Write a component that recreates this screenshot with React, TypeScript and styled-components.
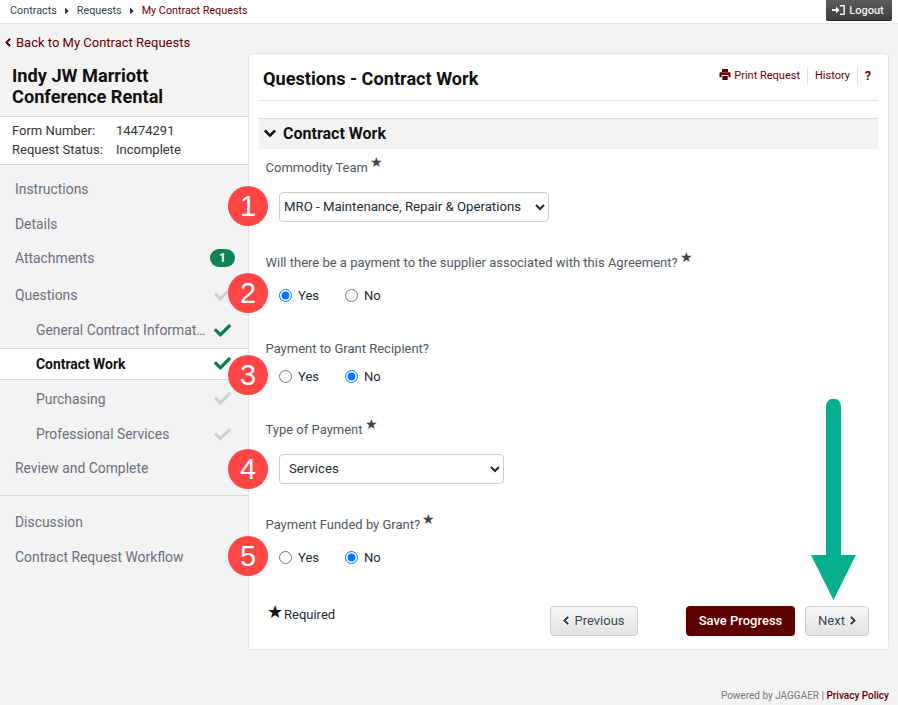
import React from "react";
import styled, { createGlobalStyle } from "styled-components";
import { FaCheck, FaChevronDown, FaChevronLeft, FaChevronRight, FaCaretRight } from "react-icons/fa";

const Global = createGlobalStyle`
  html, body { margin: 0; padding: 0; background: #f3f3f3; }
  body { font-family: Roboto, "Liberation Sans", sans-serif; color: #333; }
  * { box-sizing: border-box; }
`;

const Page = styled.div`
  position: relative;
  width: 898px;
  height: 705px;
  overflow: hidden;
  background: #f3f3f3;
`;
const TopBar = styled.header`
  height: 24px;
  background: #fff;
  border-bottom: 1px solid #e3e3e3;
  display: flex;
  justify-content: space-between;
  padding: 0 6px 0 10px;
`;
const Crumbs = styled.nav`
  display: flex;
  align-items: center;
  height: 21px;
  gap: 5px;
  font-size: 10.8px;
  color: #333f4d;
  svg { font-size: 10px; color: #222; width: 10px; }
`;
const CrumbCurrent = styled.span`
  color: #5f0000;
`;
const LogoutButton = styled.button`
  width: 66px;
  height: 21px;
  border: 0;
  border-bottom: 1px solid #222;
  border-radius: 0 0 2px 2px;
  background: linear-gradient(#5c5c5c, #3e3e3e);
  color: #eee;
  font: 500 11px Roboto, sans-serif;
  display: flex;
  align-items: center;
  justify-content: center;
  gap: 3px;
  padding: 0 2px 0 0;
`;
const Columns = styled.div`
  display: grid;
  grid-template-columns: 248px 641px;
`;
const Sidebar = styled.aside`
  display: flex;
  flex-direction: column;
`;
const BackLink = styled.a`
  display: flex;
  align-items: center;
  gap: 5px;
  height: 18px;
  margin: 9px 0 0 5px;
  font-size: 13px;
  color: #5f0000;
  white-space: nowrap;
  width: 300px;
  svg { font-size: 9px; width: 6px; stroke: currentColor; stroke-width: 50px; }
`;
const RequestTitle = styled.h1`
  margin: 14px 0 9px 12px;
  font-size: 18.2px;
  line-height: 21px;
  font-weight: 700;
  color: #111;
`;
const InfoBlock = styled.dl`
  margin: 0;
  height: 49px;
  padding: 4px 12px 0;
  background: #fff;
  border-top: 1px solid #d4d4d4;
  border-bottom: 1px solid #d4d4d4;
  display: grid;
  grid-template-columns: 104px 1fr;
  grid-auto-rows: 19px;
  font-size: 13px;
  line-height: 19px;
  color: #333;
  dt, dd { margin: 0; }
`;
const NavList = styled.nav`
  display: flex;
  flex-direction: column;
  padding-top: 7px;
`;
const NavRow = styled.a<{ $sub?: boolean; $active?: boolean; $h?: number }>`
  display: flex;
  align-items: center;
  justify-content: space-between;
  height: ${(p) => p.$h ?? 34.5}px;
  padding: 0 17px 0 ${(p) => (p.$sub ? 36 : 15)}px;
  font-size: 13.9px;
  color: ${(p) => (p.$active ? "#111" : "#6d7079")};
  font-weight: ${(p) => (p.$active ? 700 : 400)};
  background: ${(p) => (p.$active ? "#fff" : "transparent")};
  border-top: ${(p) => (p.$active ? "1px solid #d4d4d4" : "0")};
  border-bottom: ${(p) => (p.$active ? "1px solid #d4d4d4" : "0")};
`;
const NavLabel = styled.span`
  white-space: nowrap;
  overflow: hidden;
  text-overflow: ellipsis;
  max-width: 170px;
  margin-top: -1px;
`;
const CheckMark = styled(FaCheck)<{ $done?: boolean }>`
  font-size: 17px;
  color: ${(p) => (p.$done ? "#0b7d4f" : "#d0d2d5")};
  flex: none;
`;
const CountBadge = styled.span`
  width: 25px;
  height: 18px;
  border-radius: 9px;
  background: #0b8353;
  color: #fff;
  font-size: 12px;
  font-weight: 700;
  display: flex;
  align-items: center;
  justify-content: center;
  margin-right: -4px;
`;
const NavDivider = styled.hr`
  margin: 10px 0 9px;
  border: 0;
  border-top: 1px solid #d4d4d4;
`;
const Card = styled.main`
  margin-top: 29px;
  height: 597px;
  background: #fff;
  border: 1px solid #e4e4e4;
  border-radius: 4px;
  padding: 0 10px;
  display: flex;
  flex-direction: column;
`;
const CardHeader = styled.div`
  height: 47px;
  flex: none;
  display: flex;
  align-items: center;
  justify-content: space-between;
  border-bottom: 1px solid #e0e0e0;
  padding: 3px 7px 0 4px;
`;
const CardTitle = styled.h2`
  margin: 0;
  font-size: 18.15px;
  font-weight: 700;
  color: #111;
`;
const HeaderLinks = styled.div`
  display: flex;
  align-items: center;
  height: 18px;
  margin-top: -6px;
  font-size: 11px;
  color: #5f0000;
`;
const HeaderLink = styled.a`
  display: flex;
  align-items: center;
  gap: 3px;
  height: 18px;
  padding: 0 7px;
  border-right: 1px solid #ddd;
  white-space: nowrap;
  svg { margin-top: -3px; }
`;
const HelpLink = styled.a`
  padding-left: 7px;
  font-weight: 700;
  font-size: 12px;
`;
const SectionBar = styled.div`
  margin-top: 17px;
  height: 31px;
  flex: none;
  background: #f3f3f3;
  border-top: 1px solid #e0e0e0;
  display: flex;
  align-items: center;
  gap: 7px;
  padding: 0 0 2px 5px;
  font-size: 16px;
  font-weight: 700;
  color: #111;
  svg { font-size: 13px; width: 12px; stroke: currentColor; stroke-width: 30px; }
`;
const Field = styled.div<{ $top: number }>`
  margin-top: ${(p) => p.$top}px;
  padding-left: 6.5px;
`;
const FieldLabel = styled.div`
  font-size: 13px;
  line-height: 18px;
  color: #50565f;
  white-space: nowrap;
`;
const Star = styled.span`
  font-size: 14px;
  position: relative;
  top: -5px;
  margin-left: 2px;
  color: #444;
`;
const Select = styled.select<{ $w: number; $pad: number }>`
  display: block;
  width: ${(p) => p.$w}px;
  height: 30px;
  margin: 15px 0 0 13.5px;
  padding: 0 0 1px ${(p) => p.$pad}px;
  border: 1px solid #ccc;
  border-radius: 4px;
  background: #fff;
  font: 13.2px Roboto, sans-serif;
  color: #222b35;
`;
const RadioRow = styled.div<{ $starred?: boolean }>`
  display: flex;
  gap: 26px;
  margin: ${(p) => (p.$starred ? 14 : 9)}px 0 0 13.5px;
  height: 18px;
  align-items: center;
`;
const RadioLabel = styled.label`
  display: flex;
  align-items: center;
  gap: 6px;
  font-size: 13px;
  color: #222b35;
  input { margin: 0; width: 13px; height: 13px; }
`;
const Footer = styled.div`
  margin-top: 40px;
  height: 30px;
  display: flex;
  align-items: center;
  padding: 0 9px 0 9px;
`;
const RequiredNote = styled.div`
  font-size: 13px;
  color: #222b35;
  margin: -14px 214px 0 -1px;
  width: 69px;
  white-space: nowrap;
  display: flex;
  align-items: center;
  gap: 1px;
  span { font-size: 18px; line-height: 17px; color: #111; margin-top: -5px; }
`;
const GhostButton = styled.button<{ $w: number }>`
  width: ${(p) => p.$w}px;
  height: 30px;
  border: 1px solid #ccc;
  border-radius: 4px;
  background: linear-gradient(#f8f8f8, #e2e2e2);
  color: #3c4652;
  font: 13px Roboto, sans-serif;
  display: flex;
  align-items: center;
  justify-content: center;
  gap: 5px;
  padding: 0 0 2px;
  svg { font-size: 9px; width: 6px; stroke: currentColor; stroke-width: 50px; }
`;
const SaveButton = styled.button`
  width: 109px;
  height: 30px;
  margin: 0 10px 0 48px;
  border: 0;
  border-radius: 4px;
  background: #5f0000;
  color: #fff;
  font: 500 13px Roboto, sans-serif;
  padding: 0 0 2px;
`;
const PageFooter = styled.footer`
  position: absolute;
  right: 9px;
  bottom: 4px;
  font-size: 10px;
  color: #777;
  span { color: #5f0000; font-weight: 500; }
`;
const Callout = styled.div<{ $y: number }>`
  position: absolute;
  left: 228px;
  top: ${(p) => p.$y}px;
  width: 40px;
  height: 40px;
  border-radius: 50%;
  background: #ff4545;
  color: #fff;
  font: 29px/40px "Liberation Sans", Arial, sans-serif;
  text-align: center;
`;
const Arrow = styled.svg`
  position: absolute;
  left: 811px;
  top: 399px;
`;

function Radios({ name, value, starred }: { name: string; value: "yes" | "no"; starred?: boolean }) {
  return (
    <RadioRow $starred={starred}>
      <RadioLabel>
        <input type="radio" name={name} defaultChecked={value === "yes"} />
        Yes
      </RadioLabel>
      <RadioLabel>
        <input type="radio" name={name} defaultChecked={value === "no"} />
        No
      </RadioLabel>
    </RadioRow>
  );
}

export default function App() {
  return (
    <Page>
      <Global />
      <TopBar>
        <Crumbs>
          <span>Contracts</span>
          <FaCaretRight />
          <span>Requests</span>
          <FaCaretRight />
          <CrumbCurrent>My Contract Requests</CrumbCurrent>
        </Crumbs>
        <LogoutButton>
          <svg width="14" height="12" viewBox="0 0 14 12" fill="none">
            <path d="M0 5h4V2.500L7.500 6 4 9.500V7H0z" fill="#eee" />
            <path d="M8 1h4.200a.8.8 0 0 1 .8.8v8.400a.8.8 0 0 1-.8.8H8V9.500h3.500v-7H8z" fill="#eee" />
          </svg>
          Logout
        </LogoutButton>
      </TopBar>
      <Columns>
        <Sidebar>
          <BackLink>
            <FaChevronLeft /> Back to My Contract Requests
          </BackLink>
          <RequestTitle>
            Indy JW Marriott
            <br />
            Conference Rental
          </RequestTitle>
          <InfoBlock>
            <dt>Form Number:</dt>
            <dd>14474291</dd>
            <dt>Request Status:</dt>
            <dd>Incomplete</dd>
          </InfoBlock>
          <NavList>
            <NavRow>Instructions</NavRow>
            <NavRow>Details</NavRow>
            <NavRow>
              Attachments <CountBadge>1</CountBadge>
            </NavRow>
            <NavRow $h={38}>
              Questions <CheckMark />
            </NavRow>
            <NavRow $sub $h={34}>
              <NavLabel>General Contract Information</NavLabel> <CheckMark $done />
            </NavRow>
            <NavRow $sub $active $h={32}>
              Contract Work <CheckMark $done />
            </NavRow>
            <NavRow $sub $h={38}>
              Purchasing <CheckMark />
            </NavRow>
            <NavRow $sub $h={33.5}>
              Professional Services <CheckMark />
            </NavRow>
            <NavRow $h={34}>Review and Complete</NavRow>
            <NavDivider />
            <NavRow>Discussion</NavRow>
            <NavRow>Contract Request Workflow</NavRow>
          </NavList>
        </Sidebar>
        <Card>
          <CardHeader>
            <CardTitle>Questions - Contract Work</CardTitle>
            <HeaderLinks>
              <HeaderLink>
                <svg width="12" height="11" viewBox="0 0 12 11" fill="#5f0000">
                  <path d="M3 0h6v3H3z" />
                  <path d="M0.500 4a.8.8 0 0 1 .8-.8h9.400a.8.8 0 0 1 .8.800v4.200H9.500V6h-7v2.200H.5z" />
                  <path d="M3.300 7h5.400v4H3.300z" />
                </svg>
                Print Request
              </HeaderLink>
              <HeaderLink>History</HeaderLink>
              <HelpLink>?</HelpLink>
            </HeaderLinks>
          </CardHeader>
          <SectionBar>
            <FaChevronDown /> Contract Work
          </SectionBar>
          <Field $top={9}>
            <FieldLabel>
              Commodity Team<Star>★</Star>
            </FieldLabel>
            <Select $w={270} $pad={0} defaultValue="mro">
              <option value="mro">MRO - Maintenance, Repair &amp; Operations</option>
            </Select>
          </Field>
          <Field $top={31}>
            <FieldLabel>
              Will there be a payment to the supplier associated with this Agreement?<Star>★</Star>
            </FieldLabel>
            <Radios name="payment" value="yes" starred />
          </Field>
          <Field $top={36}>
            <FieldLabel>Payment to Grant Recipient?</FieldLabel>
            <Radios name="grant" value="no" />
          </Field>
          <Field $top={35}>
            <FieldLabel>
              Type of Payment<Star>★</Star>
            </FieldLabel>
            <Select $w={225} $pad={5} defaultValue="services">
              <option value="services">Services</option>
            </Select>
          </Field>
          <Field $top={31}>
            <FieldLabel>
              Payment Funded by Grant?<Star>★</Star>
            </FieldLabel>
            <Radios name="funded" value="no" starred />
          </Field>
          <Footer>
            <RequiredNote>
              <span>★</span>Required
            </RequiredNote>
            <GhostButton $w={88}>
              <FaChevronLeft /> Previous
            </GhostButton>
            <SaveButton>Save Progress</SaveButton>
            <GhostButton $w={64}>
              Next <FaChevronRight />
            </GhostButton>
          </Footer>
        </Card>
      </Columns>
      <Callout $y={186}>1</Callout>
      <Callout $y={273}>2</Callout>
      <Callout $y={355}>3</Callout>
      <Callout $y={449}>4</Callout>
      <Callout $y={536}>5</Callout>
      <Arrow width="45" height="201" viewBox="0 0 45 201">
        <path d="M15 156V7a7.500 7.500 0 0 1 15 0v149h15L22.500 201 0 156z" fill="#05ae8d" />
      </Arrow>
      <PageFooter>
        Powered by JAGGAER | <span>Privacy Policy</span>
      </PageFooter>
    </Page>
  );
}
